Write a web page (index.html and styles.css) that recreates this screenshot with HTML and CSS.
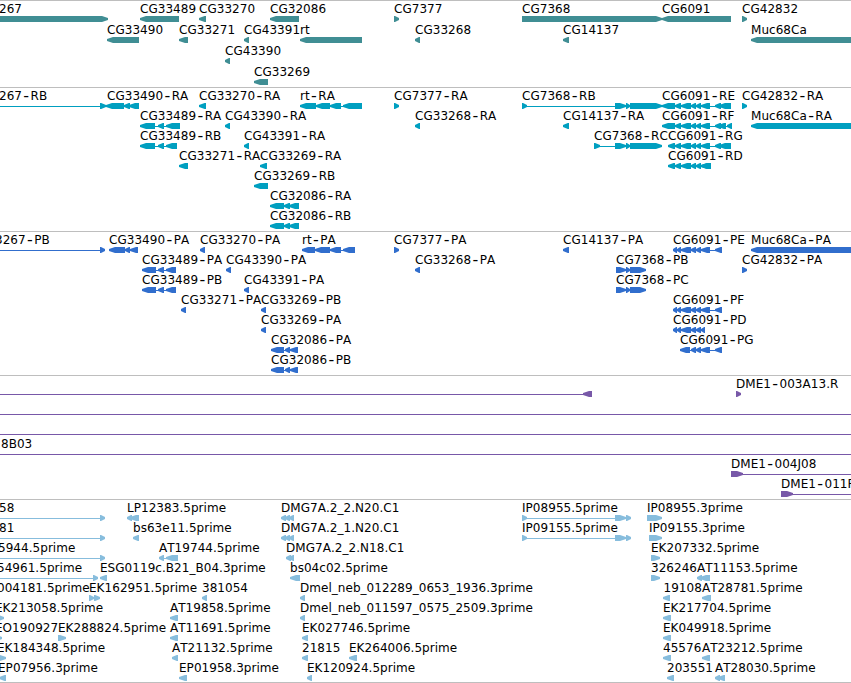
FILE: index.html
```
<!DOCTYPE html>
<html lang="en">
<head>
<meta charset="UTF-8">
<title>Genome Browser</title>
<link rel="stylesheet" href="styles.css">
</head>
<body>
<div class="browser">
    <svg class="track genes" id="genes"></svg>
    <svg class="track transcripts" id="transcripts"></svg>
    <svg class="track proteins" id="proteins"></svg>
    <svg class="track clones" id="clones"></svg>
    <svg class="track ests" id="ests"></svg>
</div>
<script src="tracks.js"></script>
</body>
</html>
```

FILE: styles.css
```
body {
    margin: 0;
    background-color: #fff;
    overflow: hidden;
}

.browser {
    display: flex;
    flex-direction: column;
    border-bottom: 1px solid #bebebe;
}

.track {
    display: block;
    width: 100%;
    box-sizing: border-box;
    border-top: 1px solid #bebebe;
    overflow: hidden;
}

.track text {
    font-family: "DejaVu Sans", sans-serif;
    font-size: 12px;
    font-kerning: none;
    letter-spacing: 0.04px;
    fill: #000;
}

.track .dash {
    font-size: 16px;
}

.track path {
    fill: currentColor;
}

.genes {
    height: 87px;
    color: #408e94;
}

.transcripts {
    height: 144px;
    color: #009fc0;
}

.proteins {
    height: 144px;
    color: #316ecd;
}

.clones {
    height: 124px;
    color: #7858a8;
}

.ests {
    height: 183px;
    color: #87bddd;
}
```

FILE: tracks.js
```
// feature: [row, label x, label, strand, "start-end start-end ..."]
// a segment that starts with "=" is drawn as a plain connecting line
const rna6091 = "675-681 681-691 691-696 696-701 701-710";
const cds6091 = "673-677 677-681 681-691 691-696 696-701";

const genes = [
    [0, -1, "267", "+", "-10-108"],
    [1, 107, "CG33490", "-", "107-139"],
    [0, 140, "CG33489", "-", "140-179"],
    [1, 179, "CG33271", "-", "179-188"],
    [0, 199, "CG33270", "-", "199-206"],
    [2, 225, "CG43390", "-", "225-230"],
    [1, 244, "CG43391", "-", "244-249"],
    [3, 254, "CG33269", "-", "254-268"],
    [0, 270, "CG32086", "-", "270-299"],
    [1, 300, "rt", "-", "300-362"],
    [0, 394, "CG7377", "+", "394-399"],
    [1, 415, "CG33268", "-", "415-420"],
    [0, 522, "CG7368", "+", "522-662"],
    [1, 563, "CG14137", "-", "563-569"],
    [0, 662, "CG6091", "-", "662-731"],
    [0, 742, "CG42832", "+", "742-747"],
    [1, 751, "Muc68Ca", "-", "751-870"]
];

const transcripts = [
    [0, -1, "267-RB", "+", "=0-100 100-106"],
    [0, 107, "CG33490-RA", "-", "106-124 124-130 129-139"],
    [1, 140, "CG33489-RA", "-", "140-155 158-164 166-180"],
    [2, 140, "CG33489-RB", "-", "140-155 158-164 166-177"],
    [3, 179, "CG33271-RA", "-", "179-188"],
    [0, 199, "CG33270-RA", "-", "199-206"],
    [1, 225, "CG43390-RA", "-", "225-230"],
    [2, 244, "CG43391-RA", "-", "244-249"],
    [3, 260, "CG33269-RA", "-", "260-267"],
    [4, 254, "CG33269-RB", "-", "254-268"],
    [5, 270, "CG32086-RA", "-", "270-284 284-290 289-299"],
    [6, 270, "CG32086-RB", "-", "270-284 284-290 289-299"],
    [0, 300, "rt-RA", "-", "300-316 316-330 330-341 343-362"],
    [0, 394, "CG7377-RA", "+", "394-399"],
    [1, 415, "CG33268-RA", "-", "415-420"],
    [0, 522, "CG7368-RB", "+", "522-527 615-626 626-630 630-662"],
    [1, 563, "CG14137-RA", "-", "563-569"],
    [2, 594, "CG7368-RC", "+", "594-600 615-626 626-630 630-662"],
    [0, 662, "CG6091-RE", "-", "662-675 " + rna6091 + " 715-721 719-731"],
    [1, 662, "CG6091-RF", "-", "662-675 " + rna6091 + " 715-721 718-726 727-732"],
    [2, 668, "CG6091-RG", "-", "668-675 " + rna6091 + " 715-721 719-731"],
    [3, 668, "CG6091-RD", "-", "668-675 " + rna6091 + " 701-711"],
    [0, 742, "CG42832-RA", "+", "742-747"],
    [1, 751, "Muc68Ca-RA", "-", "751-870"]
];

const proteins = [
    [0, -5, "3267-PB", "+", "=0-100 100-105"],
    [0, 109, "CG33490-PA", "-", "109-125 125-130 130-138"],
    [1, 142, "CG33489-PA", "-", "142-156 158-164 166-176"],
    [2, 142, "CG33489-PB", "-", "142-156 158-164 166-176"],
    [3, 181, "CG33271-PA", "-", "181-186"],
    [0, 200, "CG33270-PA", "-", "200-205"],
    [1, 226, "CG43390-PA", "-", "226-231"],
    [2, 244, "CG43391-PA", "-", "244-249"],
    [3, 261, "CG33269-PB", "-", "261-266"],
    [4, 261, "CG33269-PA", "-", "261-266"],
    [5, 271, "CG32086-PA", "-", "271-284 285-290 290-298"],
    [6, 271, "CG32086-PB", "-", "271-284 285-290 290-298"],
    [0, 302, "rt-PA", "-", "302-315 315-330 330-341 343-355"],
    [0, 394, "CG7377-PA", "+", "394-399"],
    [1, 415, "CG33268-PA", "-", "415-420"],
    [0, 563, "CG14137-PA", "-", "563-569"],
    [1, 616, "CG7368-PB", "+", "616-626 626-630 630-646"],
    [2, 616, "CG7368-PC", "+", "616-626 626-630 630-646"],
    [0, 673, "CG6091-PE", "-", cds6091 + " 701-710 715-722"],
    [3, 673, "CG6091-PF", "-", cds6091 + " 701-710 715-722"],
    [4, 673, "CG6091-PD", "-", cds6091 + " 701-705"],
    [5, 680, "CG6091-PG", "-", "680-690 691-696 696-701 701-710 715-722"],
    [0, 751, "Muc68Ca-PA", "-", "751-870"],
    [1, 742, "CG42832-PA", "+", "742-747"]
];

const clones = [
    [0, 0, "", "-", "=0-583 583-592"],
    [0, 736, "DME1-003A13.R", "+", "736-741"],
    [1, 0, "", "+", "=0-870"],
    [2, 0, "", "+", "=0-870"],
    [3, 1, "8B03", "+", "=0-870"],
    [4, 731, "DME1-004J08", "+", "731-743 =743-870"],
    [5, 781, "DME1-011F", "+", "781-793 =793-870"]
];

const ests = [
    [0, -1, "58", "+", "=0-100 100-105"],
    [1, -1, "81", "+", "=0-100 100-105"],
    [2, -2, "5944.5prime", "+", "=0-100 100-105"],
    [3, -3, "54961.5prime", "+", "=0-93 93-98"],
    [4, -3, "004181.5prime", "+", ""],
    [5, -5, "EK213058.5prime", "+", "-3-4"],
    [6, -5, "EO190927", "+", "-4-2"],
    [7, -3, "EK184348.5prime", "+", "-2-6"],
    [8, -2, "EP07956.3prime", "-", "-1-6"],
    [0, 127, "LP12383.5prime", "-", "127-132 130-139"],
    [1, 133, "bs63e11.5prime", "-", "133-139"],
    [2, 159, "AT19744.5prime", "-", "159-164 166-178"],
    [3, 100, "ESG0119c.B21_B04.3prime", "-", "100-107"],
    [4, 89, "EK162951.5prime", "+", "89-94 94-100"],
    [4, 202, "381054", "-", "202-207"],
    [5, 170, "AT19858.5prime", "-", "170-178"],
    [6, 58, "EK288824.5prime", "+", "58-66"],
    [6, 170, "AT11691.5prime", "-", "170-178"],
    [7, 172, "AT21132.5prime", "-", "172-178"],
    [8, 179, "EP01958.3prime", "-", "179-187"],
    [0, 281, "DMG7A.2_2.N20.C1", "-", "281-286 285-290 289-294"],
    [1, 281, "DMG7A.2_1.N20.C1", "-", "281-286 285-290 289-294"],
    [2, 286, "DMG7A.2_2.N18.C1", "-", "286-291 289-294"],
    [3, 290, "bs04c02.5prime", "-", "290-300"],
    [4, 300, "Dmel_neb_012289_0653_1936.3prime", "-", "300-305"],
    [5, 300, "Dmel_neb_011597_0575_2509.3prime", "-", "300-305"],
    [6, 302, "EK027746.5prime", "-", "302-308"],
    [7, 302, "21815", "-", "302-308"],
    [7, 349, "EK264006.5prime", "-", "349-357"],
    [8, 307, "EK120924.5prime", "-", "307-312"],
    [0, 522, "IP08955.5prime", "+", "522-527 615-626 626-631"],
    [1, 522, "IP09155.5prime", "+", "522-527 615-626 626-631"],
    [0, 647, "IP08955.3prime", "+", "647-662"],
    [1, 649, "IP09155.3prime", "+", "649-662"],
    [2, 651, "EK207332.5prime", "+", "651-660"],
    [3, 651, "326246", "+", "651-660"],
    [3, 697, "AT11153.5prime", "-", "697-702 700-710"],
    [4, 663.5, "19108", "-", "663-670"],
    [4, 702, "AT28781.5prime", "-", "702-711"],
    [5, 663, "EK217704.5prime", "-", "663-671"],
    [6, 663, "EK049918.5prime", "-", "663-671"],
    [7, 663, "45576", "-", "663-671"],
    [7, 702, "AT23212.5prime", "-", "702-710"],
    [8, 667, "203551", "-", "667-674"],
    [8, 715, "AT28030.5prime", "-", "715-720 718-725"]
];

// box with a blunt pointed end on the strand side
function arrow(x1, x2, y, strand) {
    const head = Math.min(6, (x2 - x1) * 0.8);
    if (strand === "+") {
        return `M${x1} ${y}H${x2 - head}L${x2} ${y + 2}V${y + 4}L${x2 - head} ${y + 6}H${x1}Z`;
    }
    return `M${x2} ${y}H${x1 + head}L${x1} ${y + 2}V${y + 4}L${x1 + head} ${y + 6}H${x2}Z`;
}

// thin line in the middle of a row
function line(x1, x2, top) {
    return `M${x1} ${top + 18}H${x2}V${top + 19}H${x1}Z`;
}

function label(x, y, text) {
    // hyphens are drawn wider than the font has them
    const html = text.replace(/-(.)/, '<tspan class="dash" dx="1.3" dy="1.4">-</tspan><tspan dx="1.4" dy="-1.4">$1</tspan>');
    return `<text x="${x}" y="${y}">${html}</text>`;
}

function drawTrack(id, features, rowHeight) {
    let html = "";
    features.forEach(([row, x, name, strand, segments]) => {
        const top = row * rowHeight;
        let last = null;
        segments.split(" ").filter(s => s).forEach(s => {
            const [, plain, a, b] = s.match(/^(=?)(-?\d+)-(\d+)$/);
            const x1 = Number(a), x2 = Number(b);
            if (plain) {
                html += `<path d="${line(x1, x2, top)}"/>`;
            } else {
                if (last !== null && x1 > last) {
                    html += `<path d="${line(last - 1, x1 + 1, top)}"/>`;
                }
                html += `<path d="${arrow(x1, x2, top + 15, strand)}"/>`;
            }
            last = x2;
        });
        if (name) html += label(x, top + 12, name);
    });
    document.getElementById(id).innerHTML = html;
}

drawTrack("genes", genes, 21);
drawTrack("transcripts", transcripts, 20);
drawTrack("proteins", proteins, 20);
drawTrack("clones", clones, 20);
drawTrack("ests", ests, 20);
```
